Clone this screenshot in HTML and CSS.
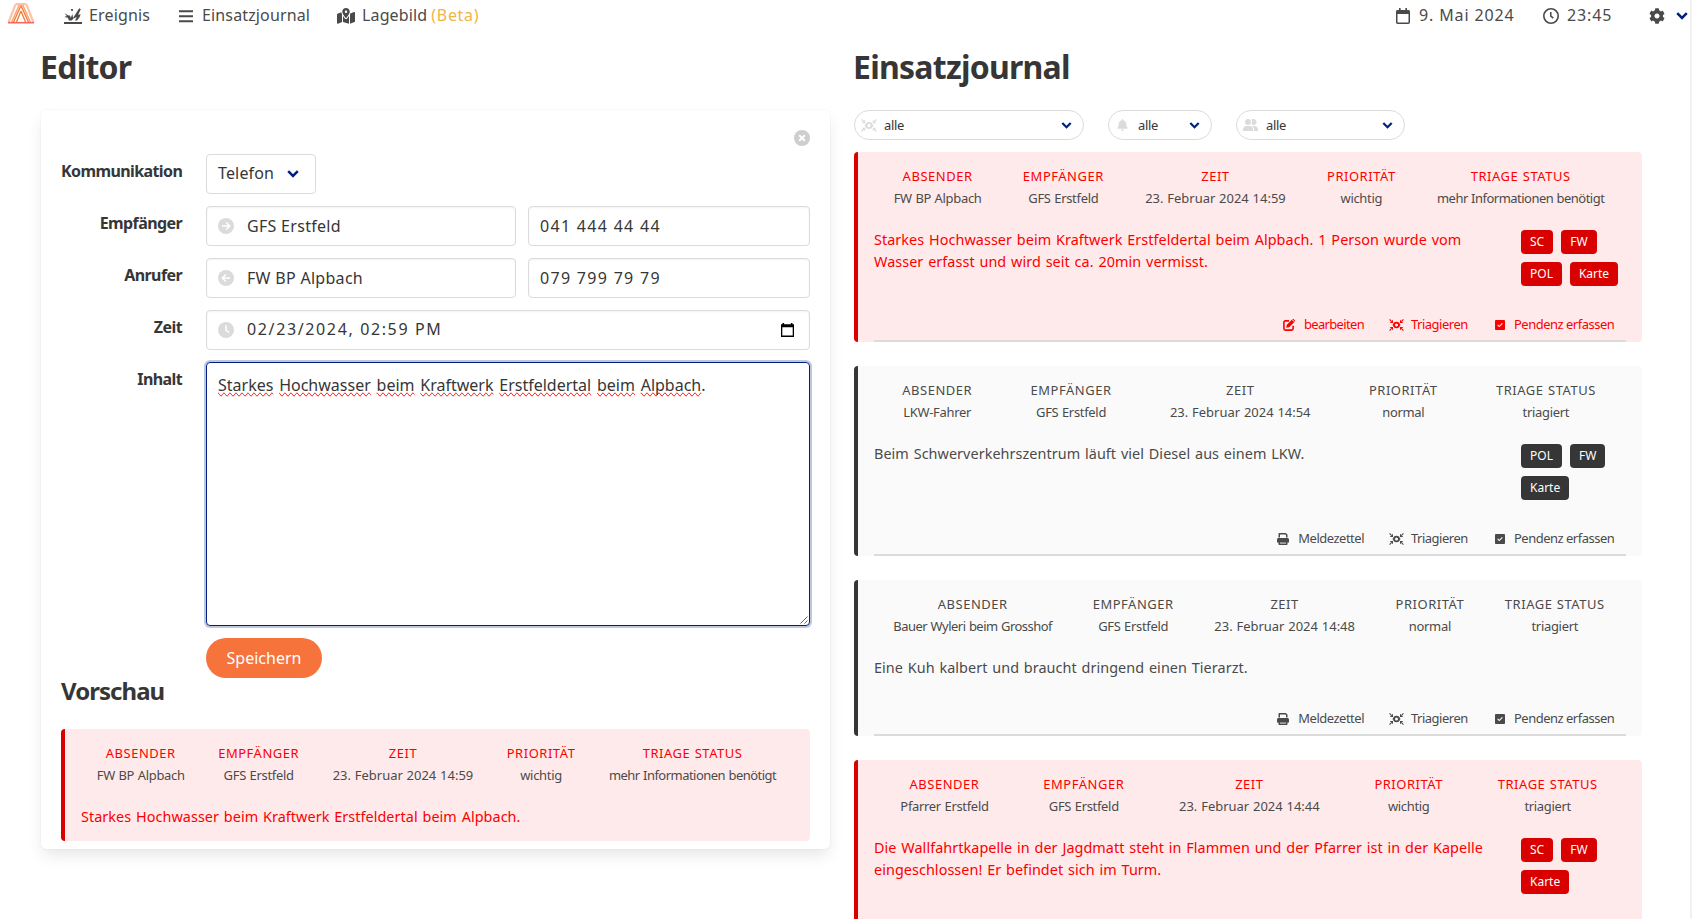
FILE: index.html
```html
<!DOCTYPE html>
<html lang="de">
<head>
<meta charset="utf-8">
<title>Einsatzjournal</title>
<link rel="stylesheet" href="styles.css">
</head>
<body>
<svg class="sprite" aria-hidden="true">
  <symbol id="i-explosion" viewBox="0 0 18 16"><path d="M0 14h18v2H0z"/><path d="M.5 5.200l4 2.300h1.600l.6 2.600 1.700-4 .7 4L15.200.3l1.600.9-2.600 5.600 2.500-.6-1.300 3.200-2.400 3.100h-2l1.800-3.400-3.300 1.300-1.800 2.100H5L3.800 9.800.3 9.100l2.500-1.200z"/><path d="M6.800.9h2.100V3H7.400z"/></symbol>
  <symbol id="i-bars" viewBox="0 0 14 14"><path d="M0 1.200h14v2H0zM0 6.200h14v2H0zM0 11.200h14v2H0z"/></symbol>
  <symbol id="i-map" viewBox="0 0 576 512"><path d="M408 120c0 54.600-73.100 151.900-105.200 192-7.700 9.600-22 9.600-29.600 0C241.100 271.900 168 174.600 168 120 168 53.700 221.700 0 288 0s120 53.700 120 120zm-120 40a40 40 0 1 0 0-80 40 40 0 0 0 0 80zM416 503l144.900-58c9.100-3.600 15.100-12.500 15.100-22.300V152c0-17-17.100-28.600-32.900-22.300l-116 46.400c-.5 1.200-1 2.500-1.500 3.700-2.900 6.800-6.100 13.700-9.600 20.600zM15.100 187.300C6 190.900 0 199.800 0 209.600V480.400c0 17 17.100 28.600 32.900 22.300L160 451.800V200.400c-3.500-6.900-6.700-13.800-9.600-20.600-5.600-13.200-10.400-27.400-12.800-41.500zM384 255c-20.500 31.300-42.300 59.600-56.200 77.100-20.500 25.600-59.100 25.600-79.600 0C234.300 314.600 212.500 286.300 192 255v196.600l192 54.900z"/></symbol>
  <symbol id="i-calendar" viewBox="0 0 14 16"><path fill-rule="evenodd" d="M3 0h1.600v2h4.800V0H11v2h1.300C13.300 2 14 2.700 14 3.700v10.600c0 1-.7 1.700-1.700 1.700H1.700C.7 16 0 15.300 0 14.300V3.700C0 2.700.7 2 1.700 2H3zM1.500 6v8.500h11V6z"/></symbol>
  <symbol id="i-clock" viewBox="0 0 16 16"><circle cx="8" cy="8" r="7.200" fill="none" stroke="currentColor" stroke-width="1.600"/><path d="M7.800 4v4.200l2.500 2" fill="none" stroke="currentColor" stroke-width="1.500"/></symbol>
  <symbol id="i-cog" viewBox="0 0 512 512"><path d="M487.400 315.700l-42.600-24.600c4.300-23.200 4.300-47 0-70.200l42.600-24.600c4.900-2.800 7.100-8.600 5.500-14-11.100-35.600-30-67.800-54.700-94.600-3.800-4.100-10-5.100-14.800-2.300L380.800 110c-17.900-15.400-38.500-27.300-60.800-35.100V25.800c0-5.600-3.900-10.500-9.400-11.700-36.700-8.200-74.300-7.800-109.200 0-5.500 1.200-9.400 6.100-9.400 11.700V75c-22.200 7.900-42.800 19.800-60.800 35.100L88.700 85.500c-4.900-2.800-11-1.900-14.800 2.300-24.700 26.700-43.600 58.900-54.700 94.600-1.700 5.400.6 11.200 5.500 14L67.300 221c-4.300 23.200-4.300 47 0 70.200l-42.600 24.600c-4.900 2.800-7.100 8.600-5.500 14 11.100 35.600 30 67.800 54.700 94.600 3.800 4.100 10 5.100 14.800 2.300l42.600-24.600c17.900 15.400 38.500 27.300 60.800 35.100v49.200c0 5.600 3.900 10.500 9.400 11.700 36.700 8.200 74.300 7.800 109.200 0 5.500-1.200 9.400-6.100 9.400-11.700v-49.200c22.200-7.900 42.800-19.800 60.800-35.100l42.600 24.600c4.900 2.800 11 1.900 14.800-2.300 24.700-26.700 43.600-58.900 54.700-94.600 1.500-5.500-.7-11.300-5.600-14.100zM256 336c-44.100 0-80-35.900-80-80s35.900-80 80-80 80 35.900 80 80-35.900 80-80 80z"/></symbol>
  <symbol id="i-chevron" viewBox="0 0 12 8"><path d="M1.200 1.200L6 6l4.800-4.800" fill="none" stroke="currentColor" stroke-width="2.500"/></symbol>
  <symbol id="i-right" viewBox="0 0 16 16"><circle cx="8" cy="8" r="8"/><path d="M4 8h7.500M8.200 4.500L11.700 8l-3.500 3.500" fill="none" stroke="#fff" stroke-width="1.500"/></symbol>
  <symbol id="i-left" viewBox="0 0 16 16"><circle cx="8" cy="8" r="8"/><path d="M12 8H4.500M7.800 4.500L4.300 8l3.500 3.500" fill="none" stroke="#fff" stroke-width="1.500"/></symbol>
  <symbol id="i-clockfill" viewBox="0 0 16 16"><circle cx="8" cy="8" r="8"/><path d="M8 3.300V8.200l3 2.200" fill="none" stroke="#fff" stroke-width="1.500"/></symbol>
  <symbol id="i-picker" viewBox="0 0 13 14"><path fill-rule="evenodd" d="M1.500 0h1.600v1.200h6.800V0h1.600v1.200H13V14H0V1.200h1.500zM1.300 4.300v8.300h10.400V4.300z"/></symbol>
  <symbol id="i-target" viewBox="0 0 16 13"><circle cx="8" cy="6.500" r="2.600" fill="none" stroke="currentColor" stroke-width="1.900"/><path d="M5 4.500L3.600 6.500 5 8.500zM11 4.500l1.400 2L11 8.500z"/><path d="M.5.500L2.500 2.500M15.500.5L13.500 2.500M.5 12.500L2.500 10.500M15.500 12.500L13.500 10.500" stroke="currentColor" stroke-width="1.200"/><path d="M4.200.7v3.500H.7zM11.800.7v3.500h3.500zM4.200 12.300V8.800H.7zM11.800 12.300V8.800h3.500z"/></symbol>
  <symbol id="i-bell" viewBox="0 0 448 512"><path d="M224 512c35.320 0 63.970-28.650 63.970-64H160.030c0 35.350 28.650 64 63.970 64zm215.390-149.710c-19.320-20.760-55.470-51.990-55.470-154.290 0-77.700-54.480-139.900-127.940-155.160V32c0-17.670-14.320-32-31.980-32s-31.980 14.330-31.980 32v20.840C118.560 68.100 64.080 130.300 64.080 208c0 102.300-36.150 133.530-55.470 154.290-6 6.450-8.660 14.160-8.610 21.710.11 16.400 12.980 32 32.100 32h383.800c19.120 0 32-15.600 32.100-32 .05-7.550-2.610-15.270-8.610-21.710z"/></symbol>
  <symbol id="i-users" viewBox="0 0 15 12"><circle cx="5" cy="3" r="3"/><path d="M0 12v-1.500C0 8.500 1.500 7 3.500 7h3C8.500 7 10 8.500 10 10.500V12zM8.500 5.300a3 3 0 1 0 0-4.600c.8 1.200.8 3.300 0 4.600zM9 7h2.500C13.500 7 15 8.500 15 10.500V12h-4v-1.500C11 9 10.200 7.700 9 7z"/></symbol>
  <symbol id="i-edit" viewBox="0 0 12 12"><path d="M6 1.900H2.400C1.500 1.900.9 2.500.9 3.400v6.200c0 .9.600 1.500 1.500 1.500h6.200c.9 0 1.500-.6 1.500-1.500V6.800" fill="none" stroke="currentColor" stroke-width="1.600"/><path d="M8.800.8l2.400 2.400-5 5-3 .6.600-3zM9.300.300c.5-.5 1.100-.4 1.500 0l.9.900c.4.400.5 1 0 1.500z"/></symbol>
  <symbol id="i-check" viewBox="0 32 448 448"><path d="M400 480H48c-26.510 0-48-21.490-48-48V80c0-26.510 21.490-48 48-48h352c26.510 0 48 21.490 48 48v352c0 26.510-21.490 48-48 48zM203 349l136-136c6-6 6-15 0-21l-16-16c-6-6-15-6-21 0L192 286l-46-46c-6-6-15-6-21 0l-16 16c-6 6-6 15 0 21l73 72c6 6 15 6 21 0z"/></symbol>
  <symbol id="i-print" viewBox="0 0 12 12"><path fill-rule="evenodd" d="M2.300 0h6.500L10.500 1.600V4.500H9V2L8.500 1.500H3v3H1.500V.8C1.500.300 1.800 0 2.300 0zM1.500 5h9c.8 0 1.500.7 1.500 1.500V9.500H0v-3C0 5.700.7 5 1.500 5z"/><path fill-rule="evenodd" d="M1.500 7.800h9v3.400c0 .5-.3.800-.8.800H2.300c-.5 0-.8-.3-.8-.8zM3 9.200v1.400h6V9.200z"/></symbol>
</svg>

<nav class="navbar">
  <svg class="logo" viewBox="0 0 28 22"><path d="M8.500 1.500L1.500 19.500M19.500 1.500L26.500 19.500M8.500 1.200h11" stroke="#fbc5ad" stroke-width="2.200"/><path d="M12.500 1.500L4.500 19.500M15.500 1.500L23.500 19.500" stroke="#f9a878" stroke-width="1.600"/><path d="M14 2.500L6.500 19.200M14 2.500L21.500 19.200M14 8L9.500 19M14 8l4.500 11" stroke="#f47a35" stroke-width="1.300"/><path d="M1 19.700H27" stroke="#f3685a" stroke-width="1.600"/></svg>
  <a class="nav-item n1"><svg class="ic-18"><use href="#i-explosion"/></svg><span>Ereignis</span></a>
  <a class="nav-item n2"><svg class="ic-14"><use href="#i-bars"/></svg><span>Einsatzjournal</span></a>
  <a class="nav-item n3"><svg class="ic-18"><use href="#i-map"/></svg><span>Lagebild</span><span class="beta">(Beta)</span></a>
  <div class="nav-end">
    <span class="nav-item date"><svg class="ic-cal"><use href="#i-calendar"/></svg><span>9. Mai 2024</span></span>
    <span class="nav-item time"><svg class="ic-16"><use href="#i-clock"/></svg><span>23:45</span></span>
    <a class="nav-item settings"><svg class="ic-16"><use href="#i-cog"/></svg><svg class="chevron"><use href="#i-chevron"/></svg></a>
  </div>
</nav>

<main class="columns">
  <section class="column">
    <h1 class="title">Editor</h1>
    <div class="box">
      <button class="delete" aria-label="Schliessen"><svg viewBox="0 0 16 16"><circle cx="8" cy="8" r="8" fill="#cecece"/><path d="M5.200 5.200l5.600 5.600M10.800 5.200l-5.600 5.600" stroke="#fff" stroke-width="2"/></svg></button>
      <div class="form">
        <label class="label">Kommunikation</label>
        <div class="control"><div class="input select"><span>Telefon</span><svg class="chevron"><use href="#i-chevron"/></svg></div></div>
        <label class="label">Empfänger</label>
        <div class="control">
          <div class="input name"><svg class="ic-16 pale"><use href="#i-right"/></svg><span>GFS Erstfeld</span></div>
          <div class="input phone">041 444 44 44</div>
        </div>
        <label class="label">Anrufer</label>
        <div class="control">
          <div class="input name"><svg class="ic-16 pale"><use href="#i-left"/></svg><span>FW BP Alpbach</span></div>
          <div class="input phone">079 799 79 79</div>
        </div>
        <label class="label">Zeit</label>
        <div class="control"><div class="input datetime"><svg class="ic-16 pale"><use href="#i-clockfill"/></svg><span>02/23/2024, 02:59 PM</span><svg class="picker"><use href="#i-picker"/></svg></div></div>
        <label class="label">Inhalt</label>
        <div class="control">
          <div class="textarea"><u>Starkes</u> <u>Hochwasser</u> <u>beim</u> <u>Kraftwerk</u> <u>Erstfeldertal</u> <u>beim</u> <u>Alpbach</u>.<svg class="grip" viewBox="0 0 8 8"><path d="M.5 7.500l7-7M4.500 7.500l3-3" stroke="#555" stroke-width=".9"/></svg></div>
        </div>
        <span></span>
        <div class="control"><button class="save">Speichern</button></div>
      </div>
      <h2 class="subtitle">Vorschau</h2>
      <article class="message danger preview">
        <div class="level">
          <div class="item"><b>Absender</b><span>FW BP Alpbach</span></div>
          <div class="item"><b>Empfänger</b><span>GFS Erstfeld</span></div>
          <div class="item"><b>Zeit</b><span class="stamp">23. Februar 2024 14:59</span></div>
          <div class="item"><b>Priorität</b><span>wichtig</span></div>
          <div class="item"><b>Triage Status</b><span class="long">mehr Informationen benötigt</span></div>
        </div>
        <p class="text">Starkes Hochwasser beim Kraftwerk Erstfeldertal beim Alpbach.</p>
      </article>
    </div>
  </section>

  <section class="column">
    <h1 class="title">Einsatzjournal</h1>
    <div class="filters">
      <div class="filter f1"><svg class="f-target"><use href="#i-target"/></svg><span>alle</span><svg class="chevron"><use href="#i-chevron"/></svg></div>
      <div class="filter f2"><svg class="f-bell"><use href="#i-bell"/></svg><span>alle</span><svg class="chevron"><use href="#i-chevron"/></svg></div>
      <div class="filter f3"><svg class="f-users"><use href="#i-users"/></svg><span>alle</span><svg class="chevron"><use href="#i-chevron"/></svg></div>
    </div>

    <article class="message danger">
      <div class="level">
        <div class="item"><b>Absender</b><span>FW BP Alpbach</span></div>
        <div class="item"><b>Empfänger</b><span>GFS Erstfeld</span></div>
        <div class="item"><b>Zeit</b><span class="stamp">23. Februar 2024 14:59</span></div>
        <div class="item"><b>Priorität</b><span>wichtig</span></div>
        <div class="item"><b>Triage Status</b><span class="long">mehr Informationen benötigt</span></div>
      </div>
      <div class="body">
        <p class="text">Starkes Hochwasser beim Kraftwerk Erstfeldertal beim Alpbach. 1 Person wurde vom<br>Wasser erfasst und wird seit ca. 20min vermisst.</p>
        <div class="tags"><span class="tag">SC</span><span class="tag">FW</span><span class="tag">POL</span><span class="tag">Karte</span></div>
      </div>
      <footer class="actions">
        <a class="a1 edit"><svg class="a-edit"><use href="#i-edit"/></svg><span>bearbeiten</span></a>
        <a class="a2"><svg class="a-target"><use href="#i-target"/></svg><span>Triagieren</span></a>
        <a class="a3"><svg class="a-check"><use href="#i-check"/></svg><span>Pendenz erfassen</span></a>
      </footer>
    </article>

    <article class="message">
      <div class="level">
        <div class="item"><b>Absender</b><span>LKW-Fahrer</span></div>
        <div class="item"><b>Empfänger</b><span>GFS Erstfeld</span></div>
        <div class="item"><b>Zeit</b><span class="stamp">23. Februar 2024 14:54</span></div>
        <div class="item"><b>Priorität</b><span>normal</span></div>
        <div class="item"><b>Triage Status</b><span>triagiert</span></div>
      </div>
      <div class="body">
        <p class="text">Beim Schwerverkehrszentrum läuft viel Diesel aus einem LKW.</p>
        <div class="tags"><span class="tag">POL</span><span class="tag">FW</span><span class="tag">Karte</span></div>
      </div>
      <footer class="actions">
        <a class="a1"><svg class="a-edit"><use href="#i-print"/></svg><span>Meldezettel</span></a>
        <a class="a2"><svg class="a-target"><use href="#i-target"/></svg><span>Triagieren</span></a>
        <a class="a3"><svg class="a-check"><use href="#i-check"/></svg><span>Pendenz erfassen</span></a>
      </footer>
    </article>

    <article class="message">
      <div class="level">
        <div class="item"><b>Absender</b><span class="long">Bauer Wyleri beim Grosshof</span></div>
        <div class="item"><b>Empfänger</b><span>GFS Erstfeld</span></div>
        <div class="item"><b>Zeit</b><span class="stamp">23. Februar 2024 14:48</span></div>
        <div class="item"><b>Priorität</b><span>normal</span></div>
        <div class="item"><b>Triage Status</b><span>triagiert</span></div>
      </div>
      <div class="body short">
        <p class="text">Eine Kuh kalbert und braucht dringend einen Tierarzt.</p>
      </div>
      <footer class="actions">
        <a class="a1"><svg class="a-edit"><use href="#i-print"/></svg><span>Meldezettel</span></a>
        <a class="a2"><svg class="a-target"><use href="#i-target"/></svg><span>Triagieren</span></a>
        <a class="a3"><svg class="a-check"><use href="#i-check"/></svg><span>Pendenz erfassen</span></a>
      </footer>
    </article>

    <article class="message danger">
      <div class="level">
        <div class="item"><b>Absender</b><span>Pfarrer Erstfeld</span></div>
        <div class="item"><b>Empfänger</b><span>GFS Erstfeld</span></div>
        <div class="item"><b>Zeit</b><span class="stamp">23. Februar 2024 14:44</span></div>
        <div class="item"><b>Priorität</b><span>wichtig</span></div>
        <div class="item"><b>Triage Status</b><span>triagiert</span></div>
      </div>
      <div class="body">
        <p class="text">Die Wallfahrtkapelle in der Jagdmatt steht in Flammen und der Pfarrer ist in der Kapelle<br>eingeschlossen! Er befindet sich im Turm.</p>
        <div class="tags"><span class="tag">SC</span><span class="tag">FW</span><span class="tag">Karte</span></div>
      </div>
    </article>
  </section>
</main>
</body>
</html>
```
FILE: styles.css
```css
* { box-sizing: border-box; margin: 0; padding: 0; }
html { height: 100%; overflow: hidden; }
body {
  height: 919px;
  overflow: hidden;
  border-right: 2px solid #f1f1f1;
  background: #fff;
  color: #4a4a4a;
  font: 16px/24px "Noto Sans", sans-serif;
}
svg { flex: none; fill: currentColor; }
button { border: 0; background: none; font: inherit; }
.sprite { position: absolute; width: 0; height: 0; }
.ic-18 { width: 18px; height: 16px; }
.ic-16 { width: 16px; height: 16px; }
.ic-14 { width: 14px; height: 14px; }
.ic-cal { width: 14px; height: 16px; }
.chevron { width: 12px; height: 8px; color: #00207f; }

.navbar { display: flex; align-items: center; height: 31px; padding-left: 7px; white-space: nowrap; letter-spacing: .14px; }
.logo { width: 28px; height: 22px; margin-top: -3px; fill: none; }
.nav-item { display: flex; align-items: center; }
.nav-item span { width: max-content; margin-top: -1px; }
.n1 { margin-left: 29px; width: 115px; gap: 7px; }
.n2 { width: 158px; gap: 9px; }
.n3 { gap: 7px; }
.n3 .beta { color: #efb549; margin-left: -3px; letter-spacing: .7px; }
.nav-end { display: flex; margin-left: auto; padding-right: 2px; letter-spacing: .87px; }
.date { width: 147px; gap: 9px; }
.time { width: 106px; gap: 8px; }
.settings { gap: 11px; }

.columns { display: grid; grid-template-columns: 789px 788px; gap: 24px; padding: 12px 0 0 41px; }
.title { height: 67px; margin-left: -1px; color: #363636; font-size: 32px; line-height: 48px; font-weight: 700; letter-spacing: -.75px; }
.box {
  position: relative;
  height: 739px;
  padding: 44px 20px 8px;
  border-radius: 6px;
  box-shadow: 0 8px 16px -2px rgba(10, 10, 10, .1), 0 0 0 1px rgba(10, 10, 10, .02);
}
.delete { position: absolute; top: 20px; right: 20px; width: 16px; height: 16px; }
.delete svg { display: block; width: 16px; height: 16px; }
.form { display: grid; grid-template-columns: 121px 604px; column-gap: 24px; row-gap: 12px; }
.label { padding-top: 5px; color: #363636; font-weight: 700; text-align: right; letter-spacing: -.6px; }
.control { display: flex; gap: 12px; }
.input {
  display: flex;
  align-items: center;
  height: 40px;
  padding: 0 11px;
  border: 1px solid #dbdbdb;
  border-radius: 4px;
  box-shadow: inset 0 1px 2px rgba(10, 10, 10, .05);
  color: #363636;
  letter-spacing: .3px;
  white-space: nowrap;
}
.select { width: 110px; justify-content: space-between; padding-right: 16px; box-shadow: none; letter-spacing: .15px; }
.select span, .datetime span { margin-top: -2px; }
.name { width: 310px; gap: 13px; }
.phone { flex: 1; letter-spacing: 1.3px; }
.datetime { flex: 1; gap: 13px; letter-spacing: 1.63px; }
.pale { color: #dbdbdb; }
.picker { width: 13px; height: 14px; margin-left: auto; margin-right: 4px; color: #000; }
.textarea {
  position: relative;
  width: 604px;
  height: 264px;
  padding: 10px 11px;
  border: 1px solid #00207f;
  border-radius: 4px;
  box-shadow: 0 0 0 2px rgba(0, 32, 127, .25);
  color: #363636;
  word-spacing: 1.6px;
  white-space: nowrap;
}
.textarea u { text-decoration: spelling-error; }
.grip { position: absolute; right: 1px; bottom: 1px; width: 8px; height: 8px; }
.save { width: 116px; height: 40px; padding-bottom: 1px; border-radius: 20px; background: #f6733c; color: #fff; }
.subtitle { height: 56px; margin-top: -5px; color: #363636; font-size: 24px; line-height: 36px; font-weight: 700; letter-spacing: -.95px; }

.message {
  margin-bottom: 24px;
  padding: 15px 16px 0;
  border-left: 4px solid #363636;
  border-radius: 4px;
  background: #fafafa;
  font-size: 14.4px;
  line-height: 21.6px;
}
.danger { border-color: #d90000; background: #ffeaeb; }
.preview { height: 112px; }
.level { display: flex; height: 61px; margin-left: -1px; margin-right: 1px; white-space: nowrap; }
.item { flex: 1 1 auto; display: flex; flex-direction: column; align-items: center; font-size: 12.96px; line-height: 19px; letter-spacing: -.3px; word-spacing: .5px; }
.item b { height: 22px; font-weight: 400; text-transform: uppercase; letter-spacing: .55px; }
.item .stamp { letter-spacing: 0; }
.item .long { letter-spacing: -.5px; }
.body { display: flex; height: 87px; justify-content: space-between; }
.body.short { height: 53px; }
.text { padding-top: 1px; white-space: nowrap; letter-spacing: .06px; word-spacing: 1px; }
.danger .item b, .danger .text, .danger .actions { color: #fc0000; }
.tags { display: flex; flex-wrap: wrap; align-content: flex-start; gap: 8px; width: 105px; padding-top: 2px; }
.tag { height: 24px; padding: 0 9px; border-radius: 4px; background: #363636; color: #fff; font-size: 12px; line-height: 24px; }
.danger .tag { background: #d90000; }
.actions { display: flex; justify-content: flex-end; height: 27px; border-bottom: 2px solid #dbdbdb; font-size: 12.96px; line-height: 18px; letter-spacing: -.48px; white-space: nowrap; }
.actions a { display: flex; align-items: flex-start; }
.actions svg { margin-top: 4px; }
.a1 { gap: 9px; margin-right: 25px; }
.edit { letter-spacing: -.65px; }
.a2 { width: 106px; gap: 7px; }
.a3 { width: 131px; gap: 9px; }
.a-edit { width: 12px; height: 12px; }
.a-target { width: 15px; height: 12px; }
.actions .a-check { width: 10px; height: 10px; margin-top: 5px; }

.filters { display: flex; gap: 24px; height: 42px; }
.filter { display: flex; align-items: center; height: 30px; border: 1px solid #dbdbdb; border-radius: 15px; color: #363636; font-size: 12.96px; letter-spacing: -.3px; }
.filter > svg:first-child { color: #dbdbdb; }
.filter span { margin-top: -1px; }
.filter .chevron { width: 11px; height: 7px; margin-left: auto; margin-right: 11px; }
.f1 { width: 230px; padding-left: 6px; gap: 7px; }
.f2 { width: 104px; padding-left: 8px; gap: 10px; }
.f3 { width: 169px; padding-left: 6px; gap: 8px; }
.f-target { width: 16px; height: 13px; }
.f-bell { width: 11px; height: 12px; }
.f-users { width: 15px; height: 12px; }
```
